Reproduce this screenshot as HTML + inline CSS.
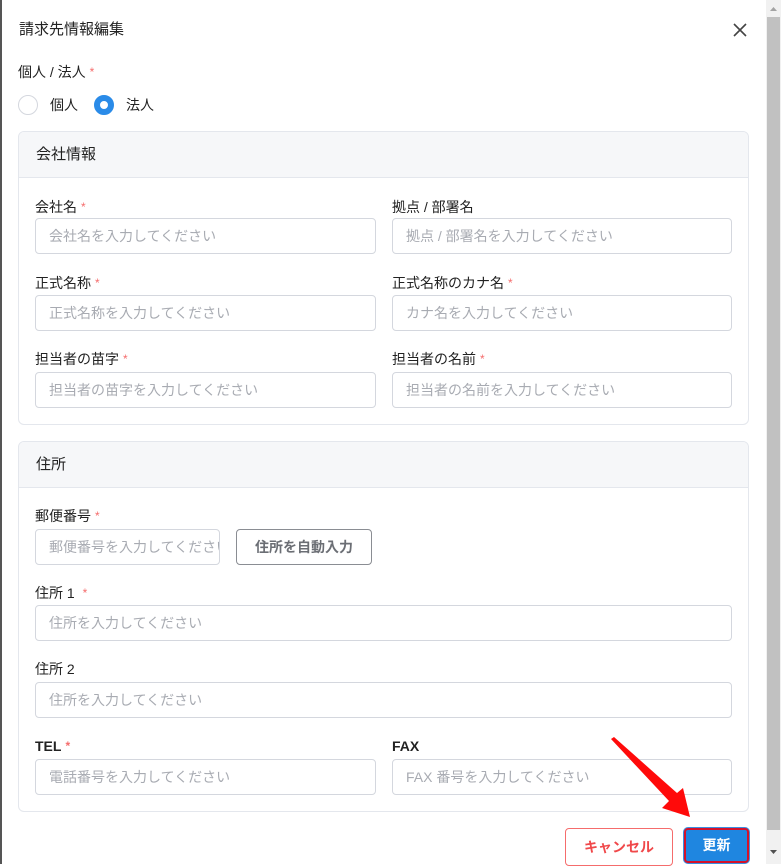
<!DOCTYPE html>
<html><head><meta charset="utf-8"><style>
*{box-sizing:border-box;margin:0;padding:0}
body{width:781px;height:864px;overflow:hidden;background:#fff;font-family:"Liberation Sans","Noto Sans CJK JP",sans-serif;color:#222;position:relative;font-size:14px}
.a{position:absolute}
.lbl{position:absolute;font-size:14px;line-height:16px;color:#222}
.req{color:#f56c6c;font-size:12px;margin-left:4px;vertical-align:top}
.in{position:absolute;height:36px;border:1px solid #d4d7de;border-radius:4px;padding-left:13px;line-height:34px;color:#a8abb2;font-size:14px;white-space:nowrap;overflow:hidden;background:#fff}
.card{position:absolute;left:18px;width:731px;border:1px solid #e4e7ed;border-radius:6px;overflow:hidden}
.hd{height:46px;background:#f6f7f9;border-bottom:1px solid #e4e7ed;padding-left:17px;line-height:46px;font-size:15px}
</style></head><body>
<div class="a" style="left:0;top:0;width:2px;height:864px;background:#555"></div>
<div class="a" style="left:19px;top:21px;font-size:15px;line-height:18px">請求先情報編集</div>
<svg class="a" style="left:733px;top:23px" width="14" height="14"><path d="M1 1L13 13M13 1L1 13" stroke="#444" stroke-width="1.6"/></svg>
<div class="lbl" style="left:18px;top:64px">個人 / 法人<span class="req">*</span></div>
<div class="a" style="left:18px;top:95px;width:20px;height:20px;border:1px solid #d4d7de;border-radius:50%"></div>
<div class="lbl" style="left:50px;top:97px">個人</div>
<div class="a" style="left:94px;top:95px;width:20px;height:20px;border:6px solid #2a8be8;border-radius:50%;background:#fff"></div>
<div class="lbl" style="left:126px;top:97px">法人</div>

<div class="card" style="top:131px;height:294px"><div class="hd">会社情報</div></div>
<div class="lbl" style="left:35px;top:199px">会社名<span class="req">*</span></div>
<div class="in" style="left:35px;top:218px;width:341px">会社名を入力してください</div>
<div class="lbl" style="left:392px;top:199px">拠点 / 部署名</div>
<div class="in" style="left:392px;top:218px;width:340px">拠点 / 部署名を入力してください</div>
<div class="lbl" style="left:35px;top:275px">正式名称<span class="req">*</span></div>
<div class="in" style="left:35px;top:295px;width:341px">正式名称を入力してください</div>
<div class="lbl" style="left:392px;top:275px">正式名称のカナ名<span class="req">*</span></div>
<div class="in" style="left:392px;top:295px;width:340px">カナ名を入力してください</div>
<div class="lbl" style="left:35px;top:351px">担当者の苗字<span class="req">*</span></div>
<div class="in" style="left:35px;top:372px;width:341px">担当者の苗字を入力してください</div>
<div class="lbl" style="left:392px;top:351px">担当者の名前<span class="req">*</span></div>
<div class="in" style="left:392px;top:372px;width:340px">担当者の名前を入力してください</div>

<div class="card" style="top:441px;height:371px"><div class="hd">住所</div></div>
<div class="lbl" style="left:35px;top:508px">郵便番号<span class="req">*</span></div>
<div class="in" style="left:35px;top:529px;width:185px">郵便番号を入力してください</div>
<div class="a" style="left:236px;top:529px;width:136px;height:36px;border:1px solid #8a8d93;border-radius:4px;text-align:center;line-height:34px;font-weight:bold;color:#6b6e74;font-size:14px">住所を自動入力</div>
<div class="lbl" style="left:35px;top:585px">住所 1 <span class="req">*</span></div>
<div class="in" style="left:35px;top:605px;width:697px">住所を入力してください</div>
<div class="lbl" style="left:35px;top:661px">住所 2</div>
<div class="in" style="left:35px;top:682px;width:697px">住所を入力してください</div>
<div class="lbl" style="left:35px;top:738px;font-weight:bold">TEL<span class="req">*</span></div>
<div class="in" style="left:35px;top:759px;width:341px">電話番号を入力してください</div>
<div class="lbl" style="left:392px;top:738px;font-weight:bold">FAX</div>
<div class="in" style="left:392px;top:759px;width:340px">FAX 番号を入力してください</div>

<div class="a" style="left:565px;top:828px;width:108px;height:38px;border:1px solid #f56c6c;border-radius:4px;color:#f0484a;text-align:center;line-height:36px;font-weight:bold;font-size:14px">キャンセル</div>
<div class="a" style="left:684px;top:828px;width:65px;height:35px;border:2px solid #d4112a;border-radius:4px;background:#1f86e0;color:#fff;text-align:center;line-height:31px;font-weight:bold;font-size:14px;box-shadow:0 0 0 1px #3a8fe0">更新</div>

<svg class="a" style="left:0;top:0" width="781" height="864"><polygon points="611,739 614,737 677,793 683,788 690,817 662,808 669,801" fill="#ff0a0a"/></svg>

<div class="a" style="left:766px;top:0;width:15px;height:864px;background:#f1f1f1"></div>
<div class="a" style="left:767px;top:17px;width:13px;height:813px;background:#c1c1c1"></div>
<svg class="a" style="left:766px;top:0" width="15" height="864"><path d="M4 11L7.5 7L11 11Z" fill="#a3a3a3"/><path d="M4 850L7.5 854L11 850Z" fill="#505050"/></svg>
</body></html>
